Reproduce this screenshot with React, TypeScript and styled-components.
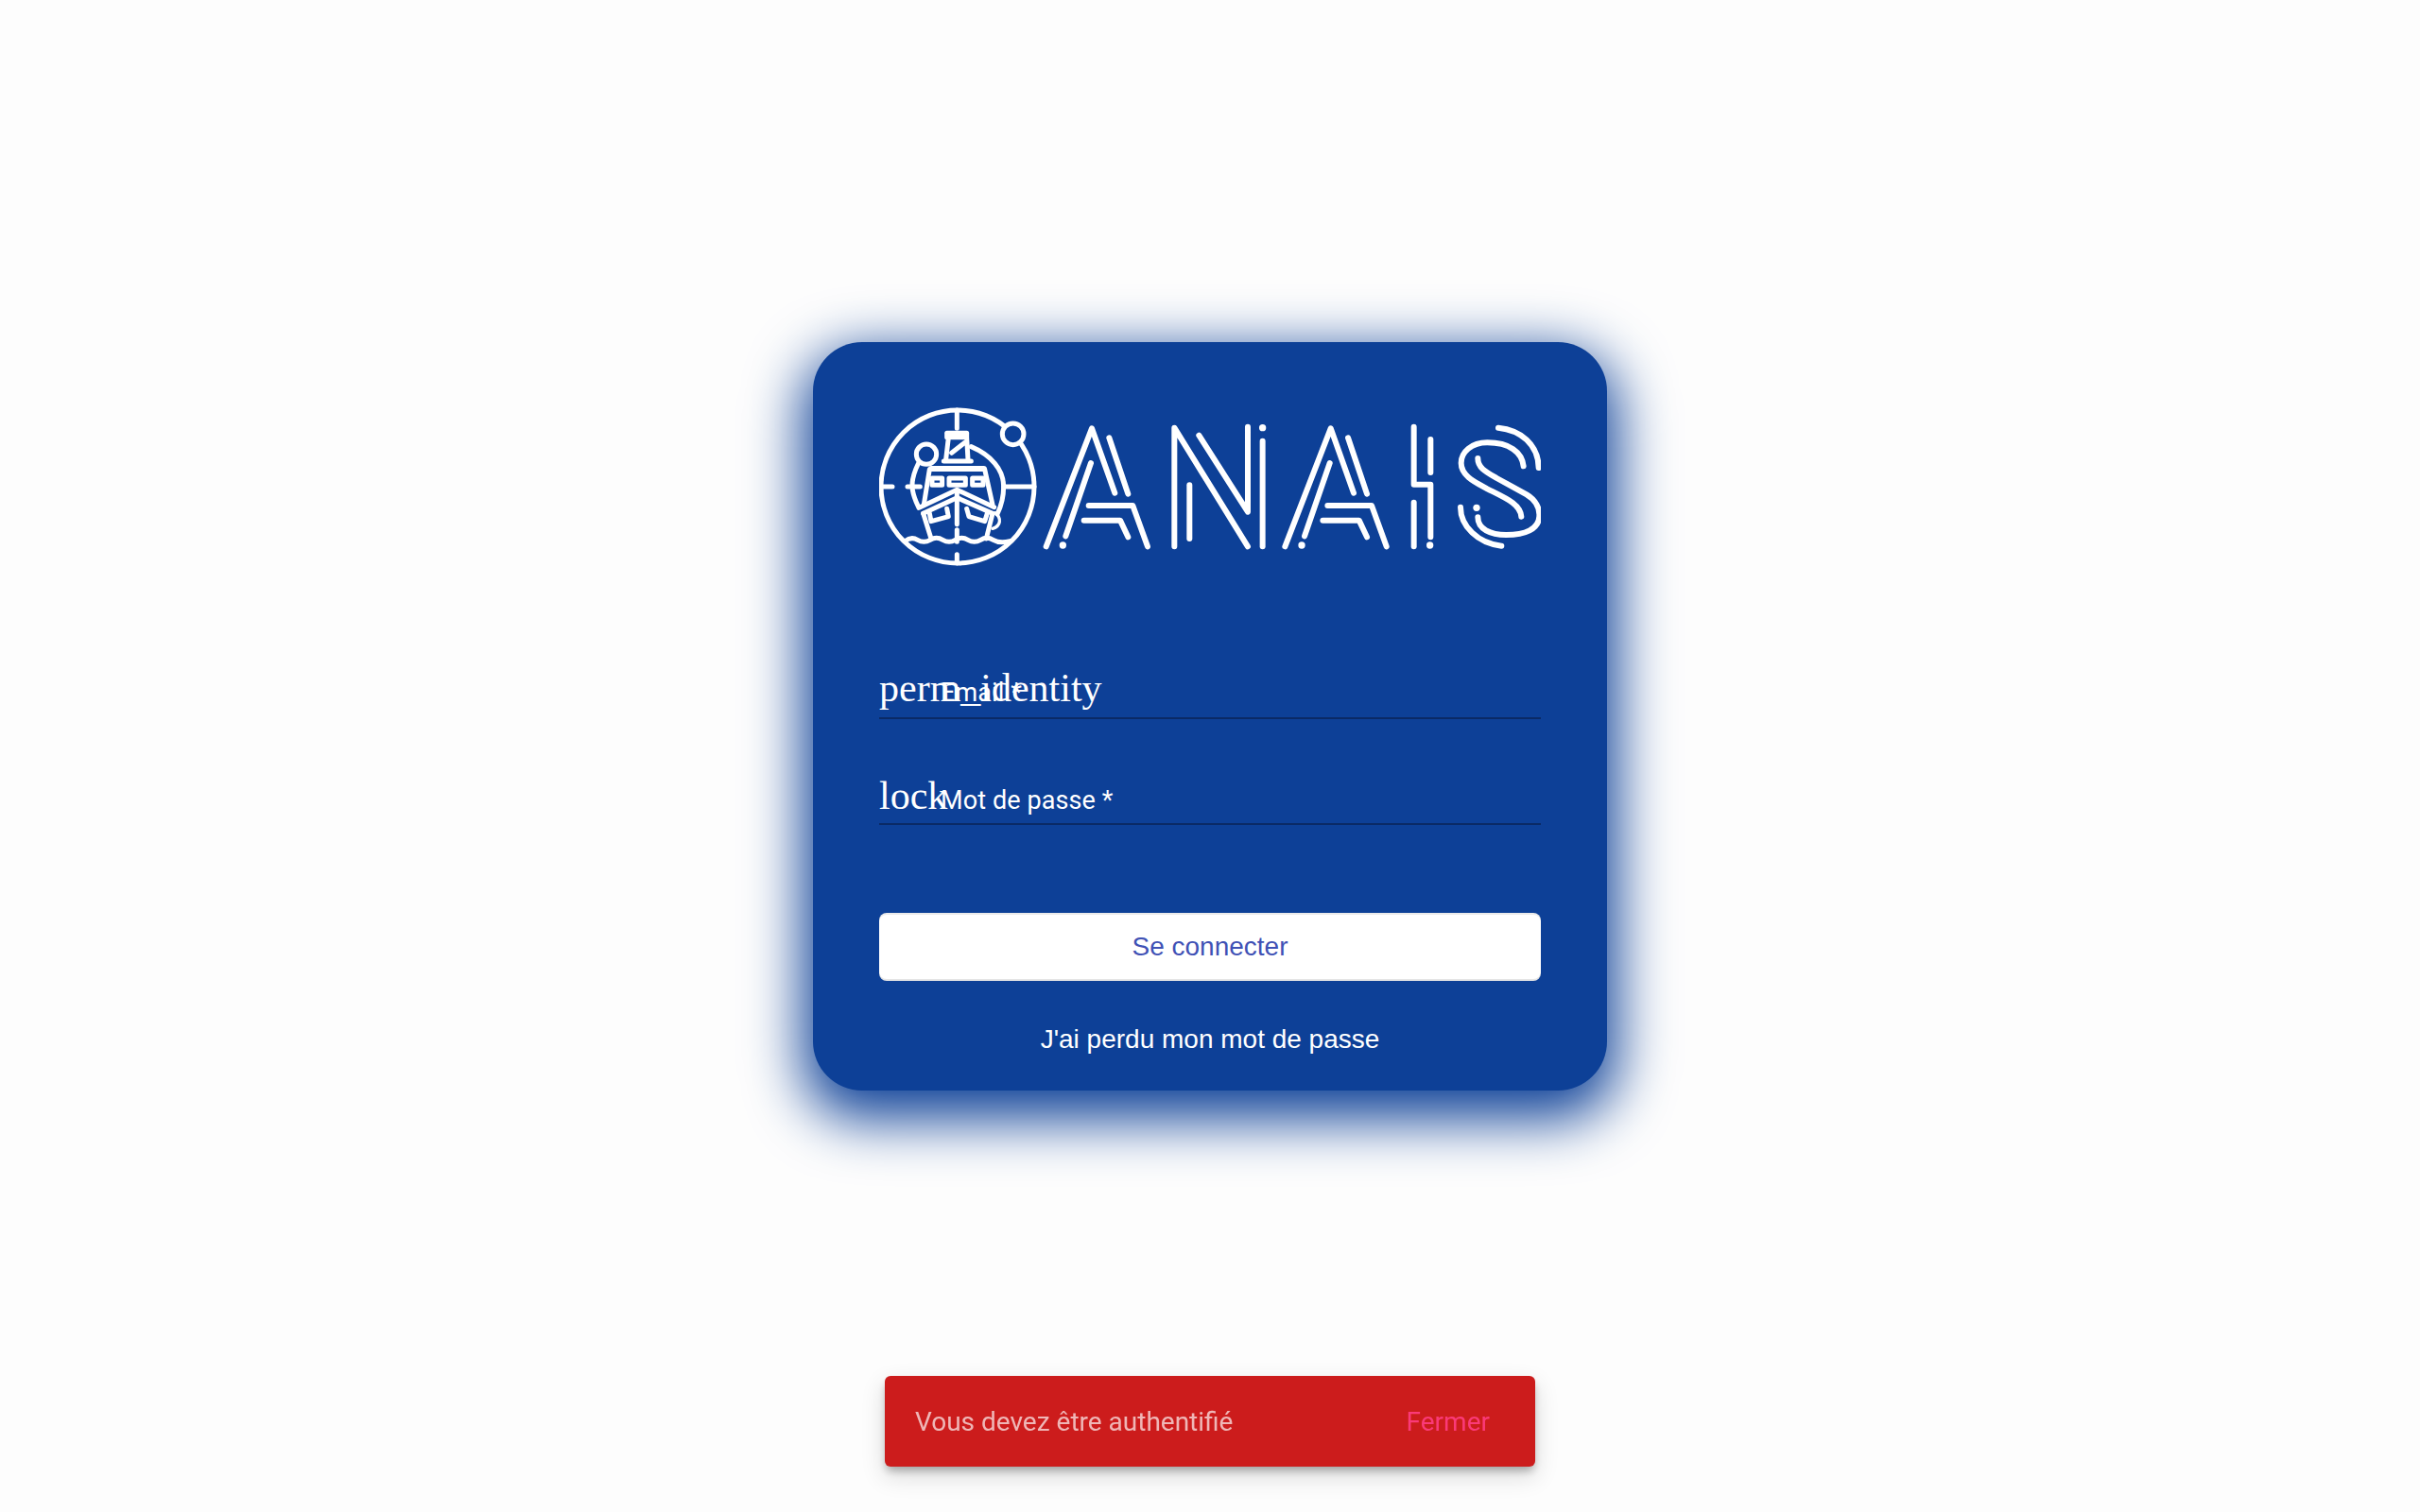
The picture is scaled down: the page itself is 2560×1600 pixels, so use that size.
// App.tsx - ANAIS login page
import styled, { createGlobalStyle } from 'styled-components';

const GlobalStyle = createGlobalStyle`
  html, body {
    margin: 0;
    padding: 0;
    background-color: #fdfdfd;
  }
`;

const Page = styled.main`
  box-sizing: border-box;
  height: 1600px;
  padding-top: 362px;
  display: flex;
  justify-content: center;
  align-items: flex-start;
  overflow: hidden;
`;

const Card = styled.section`
  box-sizing: border-box;
  width: 840px;
  height: 792px;
  padding: 68px 70px 0;
  background-color: #0d4097;
  border-radius: 52px;
  box-shadow: 0 20px 60px 10px #0d4097;
  display: flex;
  flex-direction: column;
`;

const LogoSvg = styled.svg`
  display: block;
  width: 700px;
  height: 170px;
  margin-bottom: 90px;
  fill: none;
  stroke: #fff;
  stroke-linecap: round;
  stroke-linejoin: round;
  filter: blur(0.5px);
`;

const Field = styled.div<{ $height: number; $gap: number }>`
  display: flex;
  align-items: baseline;
  height: ${(p) => p.$height}px;
  padding-top: 8px;
  box-sizing: border-box;
  margin-bottom: ${(p) => p.$gap}px;
  border-bottom: 2.5px solid #0a2a66;
  color: #fff;
`;

const FieldIcon = styled.span`
  flex: 0 0 65px;
  width: 65px;
  min-width: 0;
  font-family: 'Liberation Serif', serif;
  font-size: 42px;
  line-height: 60px;
  white-space: nowrap;
`;

const FieldLabel = styled.label`
  font-family: Roboto, sans-serif;
  font-size: 27px;
  letter-spacing: 0.1px;
  white-space: nowrap;
`;

const SubmitButton = styled.button`
  width: 700px;
  height: 72px;
  border: none;
  border-radius: 8px;
  background-color: #fff;
  color: #3f51b5;
  font-family: 'Liberation Sans', sans-serif;
  font-size: 28px;
  box-shadow: inset 0 -2px 0 rgba(0, 0, 0, 0.1), inset 0 2px 0 rgba(0, 0, 0, 0.08);
`;

const LostLink = styled.a`
  margin-top: 42px;
  color: #fff;
  font-family: 'Liberation Sans', sans-serif;
  font-size: 28px;
  line-height: 40px;
  text-align: center;
`;

const Snackbar = styled.div`
  position: fixed;
  left: 936px;
  bottom: 48px;
  box-sizing: border-box;
  width: 688px;
  height: 96px;
  padding: 0 48px 0 32px;
  display: flex;
  align-items: center;
  justify-content: space-between;
  background-color: #cc1c1c;
  border-radius: 6px;
  box-shadow: 0 6px 10px -2px rgba(0, 0, 0, 0.3), 0 10px 24px 2px rgba(0, 0, 0, 0.12);
  font-family: Roboto, sans-serif;
  font-size: 28px;
`;

const SnackText = styled.span`
  color: rgba(255, 255, 255, 0.68);
`;

const SnackAction = styled.span`
  color: #fa3a78;
`;

const ALetter = ({ dx }: { dx: number }) => (
  <g transform={`translate(${dx} 0) scale(0.3333)`} strokeWidth={18}>
    <path d="M50 445 L195 70 L268 275" />
    <path d="M250 100 L310 278" />
    <path d="M192 180 L112 412" />
    <path d="M103 441 L103 441" strokeWidth={22} />
    <path d="M185 315 L325 315 L372 445" />
    <path d="M170 362 L285 362 L310 415" />
  </g>
);

const Logo = () => (
  <LogoSvg viewBox="0 0 700 170">
    {/* ship badge, drawn in zoomed crop coordinates */}
    <g transform="translate(20 10) scale(0.3333)" strokeWidth={15}>
      <circle cx="189" cy="225" r="243" />
      <path d="M187 -18 V40 M-54 225 H-18 M30 225 H70 M335 225 H432 M187 440 V468" />
      <path d="M232 98 C295 125 335 170 335 225 C335 260 328 285 315 312" />
      <path d="M65 150 C50 180 42 210 46 235 C50 260 58 275 66 292" />
      <circle cx="365" cy="58" r="34" fill="#0d4097" />
      <circle cx="90" cy="122" r="32" fill="#0d4097" />
      <path d="M155 55 H218 V68 H155 Z" />
      <path d="M160 70 L152 138 M218 70 L222 138 M170 118 L212 85" />
      <path d="M145 144 H232" />
      <path d="M105 168 H272" strokeWidth={18} />
      <path d="M100 170 L82 282 M275 170 L300 282" />
      <path d="M108 198 H140 V220 H108 Z M162 198 H214 V220 H162 Z M236 198 H270 V220 H236 Z" />
      <path d="M70 290 L187 235 L305 290" />
      <path d="M80 310 L187 260 L300 310" />
      <path d="M80 310 L105 390 M300 310 L280 390" />
      <path d="M187 240 V345 M187 362 V400" />
      <path d="M100 310 L105 335 L160 320 L155 295" />
      <path d="M218 295 L225 320 L275 335 L283 310" />
      <path d="M308 308 C330 325 326 350 300 358" strokeWidth={10} />
      <path d="M22 398 Q42 382 62 394 T102 394 T142 394 T182 394 T222 394 T262 394 T302 394 T355 398" />
    </g>
    <ALetter dx={160} />
    {/* N and the dotted I */}
    <g transform="translate(160 0) scale(0.3333)" strokeWidth={18}>
      <path d="M457 445 V68 L690 445" />
      <path d="M535 92 L690 335 V65" />
      <path d="M505 250 V420" />
      <path d="M737 110 V445" />
      <path d="M737 68 L737 68" strokeWidth={22} />
    </g>
    <ALetter dx={412.7} />
    {/* I */}
    <g transform="translate(430 0) scale(0.3333)" strokeWidth={18}>
      <path d="M407 65 V248 H460 V415" />
      <path d="M460 105 V210" />
      <path d="M407 305 V445" />
      <path d="M458 441 L458 441" strokeWidth={22} />
    </g>
    {/* S */}
    <g transform="translate(600 10) scale(0.3333)" strokeWidth={18}>
      <path d="M165 38 C235 45 292 90 293 165" />
      <path d="M245 160 C240 115 200 85 130 85 C80 85 47 115 47 150 C47 190 90 210 130 232 C190 262 235 280 238 320" />
      <path d="M100 135 C100 165 125 178 160 198 L255 250 C285 268 297 295 295 320 C293 360 250 378 190 378 C140 378 100 360 100 322" />
      <path d="M96 292 L96 292" strokeWidth={22} />
      <path d="M45 290 C45 350 100 405 175 413" />
    </g>
  </LogoSvg>
);

const App = () => (
  <>
    <GlobalStyle />
    <Page>
      <Card>
        <Logo />
        <Field $height={71} $gap={43}>
          <FieldIcon>perm_identity</FieldIcon>
          <FieldLabel>Email *</FieldLabel>
        </Field>
        <Field $height={69} $gap={93}>
          <FieldIcon>lock</FieldIcon>
          <FieldLabel>Mot de passe *</FieldLabel>
        </Field>
        <SubmitButton type="button">Se connecter</SubmitButton>
        <LostLink>J'ai perdu mon mot de passe</LostLink>
      </Card>
    </Page>
    <Snackbar>
      <SnackText>Vous devez être authentifié</SnackText>
      <SnackAction>Fermer</SnackAction>
    </Snackbar>
  </>
);

export default App;
